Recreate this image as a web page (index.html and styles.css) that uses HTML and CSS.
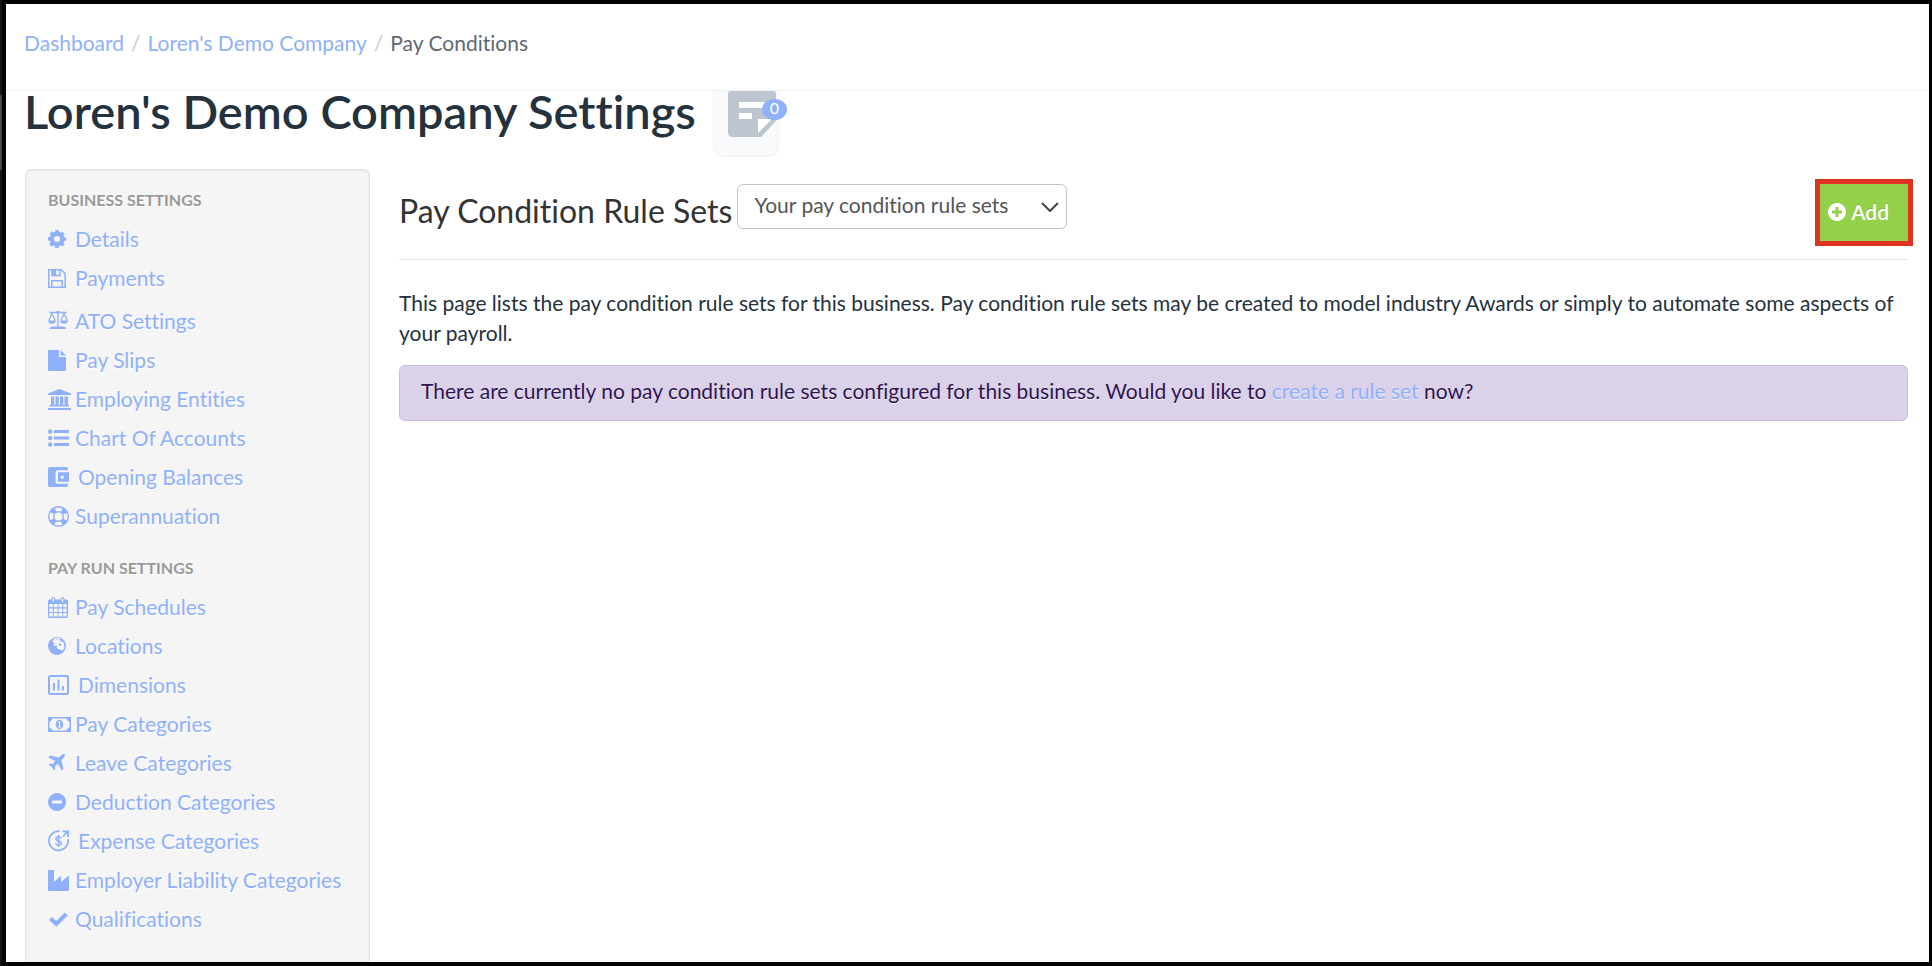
FILE: index.html
```html
<!DOCTYPE html>
<html lang="en">
<head>
<meta charset="utf-8">
<title>Pay Conditions</title>
<link rel="stylesheet" href="styles.css">
</head>
<body>
<header class="topbar">
  <nav aria-label="Breadcrumb">
    <ol class="breadcrumb">
      <li><a href="#">Dashboard</a></li>
      <li><a href="#">Loren's Demo Company</a></li>
      <li aria-current="page">Pay Conditions</li>
    </ol>
  </nav>
</header>

<div class="title-row">
  <h1>Loren's Demo Company Settings</h1>
  <button class="notes" type="button" aria-label="Notes">
    <svg class="notes-icon" viewBox="0 0 48 46" aria-hidden="true"><path fill="#bdc5cf" d="M3 0h42q3 0 3 3v27L33 46H5q-5 0-5-5V3q0-3 3-3z"/><path fill="#fff" d="M11 11h26v6H11zM11 22h13v6H11zM30 28h14L30 42z"/></svg>
    <span class="badge">0</span>
  </button>
</div>

<div class="layout">
  <aside class="sidebar">
    <h3>Business Settings</h3>
    <ul>
      <li><a href="#"><svg viewBox="0 0 24 24"><g fill="none" stroke="currentColor"><circle cx="9" cy="12" r="5.2" stroke-width="4.4"/><circle cx="9" cy="12" r="7.8" stroke-width="2.6" stroke-dasharray="3.5 2.626" stroke-dashoffset="1.75"/></g></svg>Details</a></li>
      <li><a href="#"><svg viewBox="0 0 24 24"><path fill="none" stroke="currentColor" stroke-width="1.5" d="M.8 3.8h12.4l4 4v13.4H.8zM3.8 21v-6.2h10.4V21M4 4v5.5h8V4"/><path fill="currentColor" d="M4 4h4v5.500H4z"/></svg>Payments</a></li>
      <li class="tall"><a href="#"><svg viewBox="0 0 24 24"><path fill="none" stroke="currentColor" stroke-width="1.300" d="M1.500 3.500h17M10 3.500V19M.8 11.500L4 4.500l3.200 7M12.800 11.500L16 4.500l3.200 7"/><path fill="currentColor" d="M0 11.500h8q-.5 3.200-4 3.200t-4-3.200zM12 11.500h8q-.5 3.200-4 3.200t-4-3.200zM2 19q0-1.500 4-1.500h8q4 0 4 1.500v1H2z"/><circle cx="10" cy="3.500" r="1.700" fill="currentColor"/></svg>ATO Settings</a></li>
      <li><a href="#"><svg viewBox="0 0 24 24"><path fill="currentColor" d="M0 3q0-1 1-1h10v7h7v13q0 1-1 1H1q-1 0-1-1zM12.500 2l5.500 5.500h-5.500z"/></svg>Pay Slips</a></li>
      <li><a href="#"><svg viewBox="0 0 24 24"><path fill="currentColor" d="M11.500 2L23 6.500V8H0V6.500zM3 9.500h3.200V18h1.300V9.500h3.200V18H12V9.500h3.200V18h1.300V9.500H20V18h1v1.500H1.500V18H3zM0 21h23v2H0z"/></svg>Employing Entities</a></li>
      <li><a href="#"><svg viewBox="0 0 24 24"><path fill="currentColor" d="M6 4h15v3H6zM6 10.500h15v3H6zM6 17h15v3H6z"/><g fill="currentColor"><circle cx="2.200" cy="5.500" r="2.200"/><circle cx="2.200" cy="12" r="2.200"/><circle cx="2.200" cy="18.500" r="2.200"/></g></svg>Chart Of Accounts</a></li>
      <li class="spaced"><a href="#"><svg viewBox="0 0 24 24"><path fill="currentColor" fill-rule="evenodd" d="M2 2h16q2 0 2 2v1.300h-10q-2.500 0-2.500 2.500v8.400q0 2.500 2.500 2.500h10V20q0 2-2 2H2q-2 0-2-2V4q0-2 2-2zM10 7.300h11v9.400H10zM14.200 10.500a1.700 1.700 0 1 0 .01 0z"/></svg>Opening Balances</a></li>
      <li><a href="#"><svg viewBox="0 0 24 24"><g fill="none" stroke="currentColor"><circle cx="10.500" cy="12.500" r="9.800" stroke-width="1.400"/><circle cx="10.500" cy="12.500" r="4.800" stroke-width="1.400"/><circle cx="10.500" cy="12.500" r="7.300" stroke-width="5" stroke-dasharray="5 6.467" stroke-dashoffset="-3.233"/></g></svg>Superannuation</a></li>
    </ul>
    <h3>Pay Run Settings</h3>
    <ul>
      <li><a href="#"><svg viewBox="0 0 24 24"><path fill="currentColor" fill-rule="evenodd" d="M1.500 4.500h17q1.500 0 1.500 1.500v15.500q0 1.500-1.500 1.500h-17Q0 23 0 21.500V6q0-1.500 1.500-1.500zM1.300 9v3.300h3.500V9zm4.500 0v3.300h3.700V9zm4.700 0v3.300h3.700V9zm4.700 0v3.300h3.500V9zM1.300 13.400v3.500h3.500v-3.500zm4.500 0v3.500h3.700v-3.500zm4.700 0v3.500h3.700v-3.500zm4.700 0v3.500h3.500v-3.500zM1.300 18v3.600h3.500V18zm4.500 0v3.600h3.700V18zm4.700 0v3.600h3.700V18zm4.700 0v3.600h3.500V18z"/><g fill="#f5f5f5" stroke="currentColor" stroke-width="1.200"><rect x="4" y="2.500" width="2.600" height="5" rx="1.300"/><rect x="13.200" y="2.500" width="2.600" height="5" rx="1.300"/></g></svg>Pay Schedules</a></li>
      <li><a href="#"><svg viewBox="0 0 24 24"><circle cx="9" cy="12" r="9" fill="currentColor"/><path fill="#f5f5f5" d="M6.500 4.500l4-.8 1.500 1-1 1.500 2 .3-1 1.600 3-.6 1 2.500.5 3-1 2.500-1.500 1-1.500-.8-2.500-.7-1.500-1.500 1-1.500-1.500-.7-1.700 1-.8-1.500 1.700-1.500-2-.5L4.500 7z"/><path fill="currentColor" d="M8.500 5l1.500.2-1 1.300zM10.500 9.500l2.500.2.500 1.500-2.500.5z"/></svg>Locations</a></li>
      <li class="spaced"><a href="#"><svg viewBox="0 0 24 24"><rect x="1" y="3" width="19" height="18" rx="1.500" fill="none" stroke="currentColor" stroke-width="2"/><path fill="currentColor" d="M5 10h2v7.500H5zM9.500 6.500h2v11h-2zM14 13h2v4.500h-2z"/></svg>Dimensions</a></li>
      <li><a href="#"><svg viewBox="0 0 24 24"><path fill="currentColor" fill-rule="evenodd" d="M0 5h23v15H0zM4.500 6.500Q4 9 1.500 9.500v6Q4 16 4.500 18.500h14q.5-2.500 3-3v-6q-2.500-.5-3-3z"/><ellipse cx="11.500" cy="12.500" rx="3.800" ry="4.700" fill="currentColor"/><path fill="none" stroke="#f5f5f5" stroke-width="1.200" d="M10 10.800l1.600-1v5M9.800 15h3.500"/></svg>Pay Categories</a></li>
      <li><a href="#"><svg viewBox="0 0 24 24"><path fill="currentColor" d="M16.800 3.200q.7 1.600-1.300 3.800l-2.200 2.200 2.200 8.500-1.800 1.900-3.800-7L7 15.300l.3 2.700-1.400 1.500-1.900-3.600-3.500-1.800L2 12.600l2.700.3 2.700-2.900-7-3.600L2.300 4.500l8.500 2.100L13 4.400q2.200-2 3.800-1.200z"/></svg>Leave Categories</a></li>
      <li><a href="#"><svg viewBox="0 0 24 24"><path fill="currentColor" fill-rule="evenodd" d="M9 3a9 9 0 1 0 .01 0zM4.500 10.500h9q.5 0 .5.500v2q0 .5-.5.500h-9q-.5 0-.5-.5v-2q0-.5.500-.5z"/></svg>Deduction Categories</a></li>
      <li class="spaced"><a href="#"><svg viewBox="0 0 24 24"><g fill="none" stroke="currentColor"><path stroke-width="1.700" d="M11.500 2.200A9.600 9.600 0 1 0 20 10"/><path stroke-width="1.800" d="M15 7.500l4.500-4.800M14.500 2.300h5.600V8"/><path stroke-width="1.500" d="M13.200 9.300q-.5-1.500-2.700-1.500-2.600 0-2.600 2 0 1.600 2.600 2.100 2.900.5 2.900 2.300 0 2-2.900 2-2.500 0-3-1.800M10.500 6v12"/></g></svg>Expense Categories</a></li>
      <li><a href="#"><svg viewBox="0 0 24 24"><path fill="currentColor" d="M0 2.500q0-.5.500-.5h5q.5 0 .5.500V14l6.500-6q.5-.3.500.3V14l7-6q1-.5 1 .5v14q0 .5-.5.500H.5q-.5 0-.5-.5z"/></svg>Employer Liability Categories</a></li>
      <li><a href="#"><svg viewBox="0 0 24 24"><path fill="none" stroke="currentColor" stroke-width="4.200" d="M2.500 11.500l5.800 5.300L18.300 7"/></svg>Qualifications</a></li>
    </ul>
  </aside>

  <main class="content">
    <div class="page-header">
      <h2>Pay Condition Rule Sets</h2>
      <div class="select-wrap">
        <select aria-label="Rule set filter"><option>Your pay condition rule sets</option></select>
        <svg class="chevron" viewBox="0 0 18 10" aria-hidden="true"><path fill="none" stroke="#444" stroke-width="2" d="M1 1l8 8 8-8"/></svg>
      </div>
      <button class="add" type="button"><svg viewBox="0 0 18 18" aria-hidden="true"><path fill="#fff" fill-rule="evenodd" d="M9 0a9 9 0 1 0 .01 0zM7.500 4h3v3.500H14v3h-3.500V14h-3v-3.500H4v-3h3.500z"/></svg>Add</button>
    </div>
    <p class="intro">This page lists the pay condition rule sets for this business. Pay condition rule sets may be created to model industry Awards or simply to automate some aspects of your payroll.</p>
    <div class="alert">There are currently no pay condition rule sets configured for this business. Would you like to <a href="#">create a rule set</a> now?</div>
  </main>
</div>
</body>
</html>
```
FILE: styles.css
```css
*, *::before, *::after { box-sizing: border-box; }

html {
  background: linear-gradient(#1a1112 95px, #4b4344 95px, #4b4344 170px, #1a1112 170px) 0 0 / 2px 100% no-repeat #000;
}

body {
  display: flex;
  flex-direction: column;
  min-height: calc(100vh - 8px);
  margin: 4px 3px 4px 6px;
  background: #fff;
  color: #24323e;
  font-family: Lato, "Open Sans", sans-serif;
  font-size: 21px;
  font-variant-ligatures: none;
  line-height: 30px;
}

a { color: #8fb0fb; text-decoration: none; }
h1, h2, h3, p, ul, ol { margin: 0; padding: 0; }
ul, ol { list-style: none; }

.topbar {
  padding: 24px 18px 32px;
  border-bottom: 1px solid #f1f1f3;
}

.breadcrumb { display: flex; color: #5f6871; }
.breadcrumb li + li::before { content: "/"; padding: 0 7px; color: #ccc; }

.title-row {
  display: flex;
  gap: 18px;
  padding: 0 18px;
}

h1 {
  color: #24323e;
  font-size: 47px;
  font-weight: 600;
  line-height: 40px;
}

.notes {
  position: relative;
  width: 64px;
  height: 64px;
  padding: 0 0 0 14px;
  border: 0;
  border-radius: 0 0 9px 9px;
  background: #f9fafc;
  box-shadow: 0 1px 3px #e9ebef;
}

.notes-icon { display: block; width: 48px; height: 46px; margin-bottom: 18px; }

.badge {
  position: absolute;
  top: 8px;
  right: -9px;
  width: 25px;
  height: 21px;
  border-radius: 50%;
  background: #8fb0fb;
  color: #fff;
  font: 400 16px/18px Lato, sans-serif;
  text-align: center;
}

.layout {
  display: flex;
  flex: 1;
  gap: 29px;
  padding: 14px 21px 0 19px;
}

.sidebar {
  flex: 0 0 345px;
  padding: 16px 22px 0;
  border: 1px solid #e3e3e3;
  border-bottom: 0;
  border-radius: 6px 6px 0 0;
  background: #f5f5f5;
  box-shadow: inset 0 1px 2px #e4e4e4;
  text-shadow: 0 1px 0 #fff;
}

.sidebar h3 {
  color: #999;
  font-size: 16px;
  font-weight: 700;
  line-height: 28px;
  text-transform: uppercase;
}

.sidebar ul { padding: 5px 0 19px; }
.sidebar ul:last-child { padding-bottom: 16px; }

.sidebar a {
  display: flex;
  align-items: center;
  gap: 3px;
  line-height: 39px;
  white-space: nowrap;
}

.sidebar .spaced a { gap: 6px; }
.sidebar .tall { padding-top: 4px; }
.sidebar svg { flex: none; width: 24px; height: 24px; }

.content { flex: 1; min-width: 0; }

.page-header {
  display: flex;
  align-items: flex-start;
  padding: 10px 0 13px;
  border-bottom: 1px solid #e3e3e5;
}

h2 {
  padding-top: 12px;
  color: #333;
  font-size: 32px;
  font-weight: 400;
  line-height: 40px;
}

.select-wrap { position: relative; margin: 5px auto 0 5px; }

.select-wrap select {
  width: 330px;
  height: 45px;
  padding: 0 48px 3px 16px;
  appearance: none;
  border: 1px solid #c4c4c4;
  border-radius: 6px;
  background: #fff;
  color: #555;
  font: inherit;
}

.chevron {
  position: absolute;
  top: 18px;
  right: 8px;
  width: 18px;
  height: 10px;
  pointer-events: none;
}

.add {
  display: flex;
  align-items: center;
  gap: 5px;
  height: 67px;
  margin-right: -5px;
  padding: 0 19px 2px 8px;
  border: 5px solid #e03423;
  background: #93d14a;
  color: #fff;
  font: inherit;
  font-weight: 600;
  text-shadow: 0 -1px 0 #7fb83d;
}

.add svg { width: 18px; height: 18px; }

.intro { padding: 28px 0 17px; }

.alert {
  padding: 10px 21px 14px;
  border: 1px solid #cabfe0;
  border-radius: 6px;
  background: #dbd1e8;
  color: #2e1452;
  text-shadow: 0 1px 0 #f0ebf6;
}
```
